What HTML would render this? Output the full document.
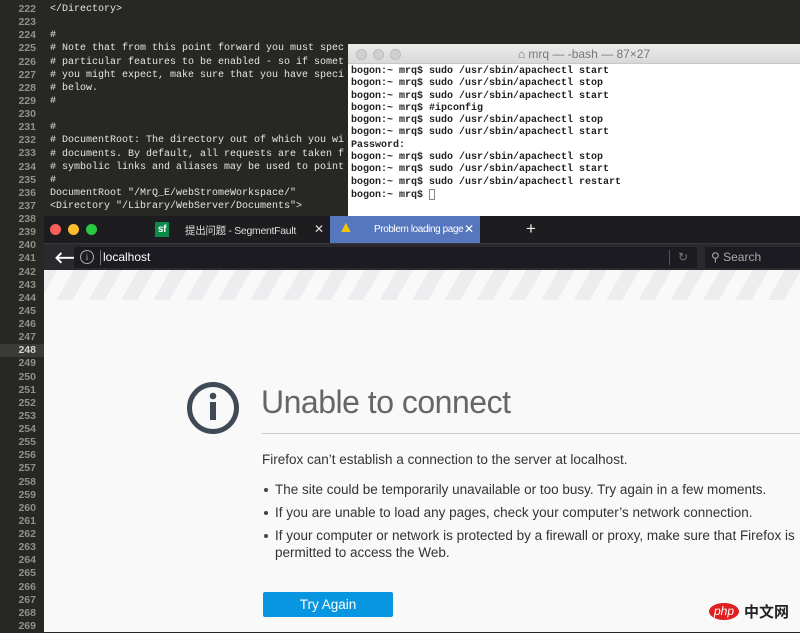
<!DOCTYPE html><html><head><style>
*{margin:0;padding:0;box-sizing:border-box}
body{width:800px;height:632px;overflow:hidden;background:#272823;position:relative;font-family:"Liberation Sans","Noto Sans CJK SC",sans-serif}
.ed{position:absolute;left:0;top:3px;font:10px/13.14px "Liberation Mono",monospace;color:#e6e6e0;white-space:pre}
.ln{position:absolute;left:0;top:3px;width:44px;font:bold 10.5px/13.14px "Liberation Sans",sans-serif;color:#8f908a}
.ln div{height:13.14px;text-align:right;padding-right:8px}
.term{position:absolute;left:348px;top:44px;width:452px;height:172px;background:#fff}
.tt{height:20px;background:linear-gradient(#ececec,#d9d9d9);border-bottom:1px solid #c8c8c8;position:relative;font-size:12px;color:#777;text-align:center;line-height:20px}
.tt i{position:absolute;top:5px;width:11px;height:11px;border-radius:50%;background:#d0d0d0;border:1px solid #bcbcbc}
.tx{font:bold 10px/12.3px "Liberation Mono",monospace;color:#222;white-space:pre;padding:2px 0 0 3px}
.br{position:absolute;left:44px;top:216px;width:756px;height:416px;background:#f9f9fa;overflow:hidden}
.tabs{height:27px;background:#1d1d20;position:relative;color:#ddd;font-size:10.5px;letter-spacing:-0.3px;white-space:nowrap}
.tabs .d{position:absolute;top:8px;width:11px;height:11px;border-radius:50%}
.tb{height:27px;background:#2a2a2e;position:relative;border-top:1px solid #38383d}
.stripes{height:30px;background:repeating-linear-gradient(-60deg,#f9f9fa 0 14px,#ededf0 14px 28px)}
ul{list-style:none}
li{position:relative;padding-left:13px;font-size:13.5px;color:#333;line-height:17px}
li:before{content:"";position:absolute;left:2px;top:7px;width:4px;height:4px;border-radius:50%;background:#444}
</style></head><body>
<div class="ln"><div>222</div><div>223</div><div>224</div><div>225</div><div>226</div><div>227</div><div>228</div><div>229</div><div>230</div><div>231</div><div>232</div><div>233</div><div>234</div><div>235</div><div>236</div><div>237</div><div>238</div><div>239</div><div>240</div><div>241</div><div>242</div><div>243</div><div>244</div><div>245</div><div>246</div><div>247</div><div style="background:#3a3b36;color:#d0d0cc">248</div><div>249</div><div>250</div><div>251</div><div>252</div><div>253</div><div>254</div><div>255</div><div>256</div><div>257</div><div>258</div><div>259</div><div>260</div><div>261</div><div>262</div><div>263</div><div>264</div><div>265</div><div>266</div><div>267</div><div>268</div><div>269</div></div>
<div class="ed" style="left:50px">&lt;/Directory&gt;

#
# Note that from this point forward you must spec
# particular features to be enabled - so if somet
# you might expect, make sure that you have speci
# below.
#

#
# DocumentRoot: The directory out of which you wi
# documents. By default, all requests are taken f
# symbolic links and aliases may be used to point
#
DocumentRoot "/MrQ_E/webStromeWorkspace/"
&lt;Directory "/Library/WebServer/Documents"&gt;</div>
<div class="term"><div class="tt"><i style="left:8px"></i><i style="left:25px"></i><i style="left:42px"></i><span style="margin-left:20px">⌂ mrq — -bash — 87×27</span></div>
<div class="tx">bogon:~ mrq$ sudo /usr/sbin/apachectl start
bogon:~ mrq$ sudo /usr/sbin/apachectl stop
bogon:~ mrq$ sudo /usr/sbin/apachectl start
bogon:~ mrq$ #ipconfig
bogon:~ mrq$ sudo /usr/sbin/apachectl stop
bogon:~ mrq$ sudo /usr/sbin/apachectl start
Password:
bogon:~ mrq$ sudo /usr/sbin/apachectl stop
bogon:~ mrq$ sudo /usr/sbin/apachectl start
bogon:~ mrq$ sudo /usr/sbin/apachectl restart
bogon:~ mrq$ <span style="display:inline-block;width:6px;height:11px;border:1px solid #888;vertical-align:middle"></span></div></div>
<div class="br">
<div class="tabs">
<span class="d" style="left:6px;background:#fc5f57"></span><span class="d" style="left:24px;background:#fdbc2e"></span><span class="d" style="left:42px;background:#28c840"></span>
<span style="position:absolute;left:111px;top:6px;width:14px;height:15px;background:#0b8a4a;color:#fff;font:bold 10px/15px sans-serif;text-align:center">sf</span>
<span style="position:absolute;left:141px;top:7px">提出问题 - SegmentFault</span>
<span style="position:absolute;left:270px;top:6px;font-size:12px">✕</span>
<div style="position:absolute;left:286px;top:0;width:150px;height:27px;background:#5677bd">
<span style="position:absolute;left:8px;top:3px;color:#f5c400;font-size:16px">▲</span>
<span style="position:absolute;left:44px;top:8px;color:#fff;font-size:10px;letter-spacing:-0.4px">Problem loading page</span>
<span style="position:absolute;left:134px;top:6px;color:#fff;font-size:12px">✕</span></div>
<span style="position:absolute;left:482px;top:3px;font-size:17px;color:#eee">+</span>
</div>
<div class="tb">
<span style="position:absolute;left:10px;top:3px;color:#fff;font-size:16px;font-weight:bold">🡐</span>
<div style="position:absolute;left:30px;top:3px;width:623px;height:21px;background:#1c1b22;border-radius:2px">
<span style="position:absolute;left:6px;top:3px;width:14px;height:14px;border:1px solid #aaa;border-radius:50%;color:#aaa;font:9px/12px serif;text-align:center">i</span>
<span style="position:absolute;left:26px;top:3px;width:1px;height:15px;background:#777"></span>
<span style="position:absolute;left:29px;top:3px;color:#fff;font-size:12px">localhost</span>
<span style="position:absolute;left:595px;top:3px;width:1px;height:15px;background:#555"></span>
<span style="position:absolute;left:604px;top:3px;color:#777;font-size:12px">↻</span></div>
<div style="position:absolute;left:661px;top:3px;width:100px;height:21px;background:#1c1b22;border-radius:2px;color:#aaa;font-size:12px;line-height:21px;padding-left:6px">⚲ Search</div>
</div>
<div class="stripes"></div>
<svg style="position:absolute;left:142px;top:165px" width="54" height="54"><circle cx="27" cy="27" r="23.5" fill="none" stroke="#3f4a57" stroke-width="5"/><circle cx="27" cy="15" r="3.3" fill="#3f4a57"/><rect x="24" y="21" width="6" height="18" fill="#3f4a57"/></svg>
<div style="position:absolute;left:217px;top:168px;font-size:32px;color:#666;letter-spacing:-0.5px">Unable to connect</div>
<div style="position:absolute;left:218px;top:217px;width:540px;height:1px;background:#ccc"></div>
<div style="position:absolute;left:218px;top:236px;font-size:13.5px;color:#333">Firefox can’t establish a connection to the server at localhost.</div>
<ul style="position:absolute;left:218px;top:265px;width:560px;white-space:nowrap">
<li style="margin-bottom:6px">The site could be temporarily unavailable or too busy. Try again in a few moments.</li>
<li style="margin-bottom:6px">If you are unable to load any pages, check your computer’s network connection.</li>
<li>If your computer or network is protected by a firewall or proxy, make sure that Firefox is<br>permitted to access the Web.</li></ul>
<div style="position:absolute;left:219px;top:376px;width:130px;height:25px;background:#0996e0;border-radius:2px;color:#fff;font-size:13.5px;text-align:center;line-height:25px">Try Again</div>
<div style="position:absolute;left:665px;top:387px;width:30px;height:17px;background:#e02020;border-radius:50%;color:#fff;font:italic 12px/16px sans-serif;text-align:center">php</div>
<div style="position:absolute;left:700px;top:385px;font-size:15px;color:#222;font-weight:bold">中文网</div>
</div>
</body></html>
